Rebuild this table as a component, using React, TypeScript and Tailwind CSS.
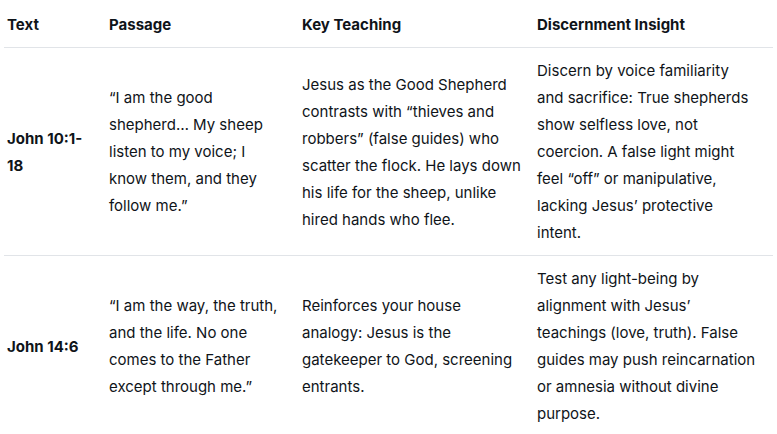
// each cell keeps the line breaks of the original rendering
const rows = [
  {
    text: ["John 10:1-", "18"],
    passage: [
      "\u201CI am the good",
      "shepherd\u2026 My sheep",
      "listen to my voice; I",
      "know them, and they",
      "follow me.\u201D",
    ],
    teaching: [
      "Jesus as the Good Shepherd",
      "contrasts with \u201Cthieves and",
      "robbers\u201D (false guides) who",
      "scatter the flock. He lays down",
      "his life for the sheep, unlike",
      "hired hands who flee.",
    ],
    insight: [
      "Discern by voice familiarity",
      "and sacrifice: True shepherds",
      "show selfless love, not",
      "coercion. A false light might",
      "feel \u201Coff\u201D or manipulative,",
      "lacking Jesus\u2019 protective",
      "intent.",
    ],
  },
  {
    text: ["John 14:6"],
    passage: [
      "\u201CI am the way, the truth,",
      "and the life. No one",
      "comes to the Father",
      "except through me.\u201D",
    ],
    teaching: [
      "Reinforces your house",
      "analogy: Jesus is the",
      "gatekeeper to God, screening",
      "entrants.",
    ],
    insight: [
      "Test any light-being by",
      "alignment with Jesus\u2019",
      "teachings (love, truth). False",
      "guides may push reincarnation",
      "or amnesia without divine",
      "purpose.",
    ],
  },
];

const Lines = ({ lines }: { lines: string[] }) => (
  <>
    {lines.map((line, i) => (
      <span key={i} className="block whitespace-nowrap">
        {line}
      </span>
    ))}
  </>
);

export default function App() {
  return (
    <div className="min-h-screen bg-white px-[4px] font-['Inter',sans-serif] text-[15px] leading-[27px] text-[#0f1419]">
      <table className="w-[769px] table-fixed border-collapse text-left">
        <colgroup>
          <col className="w-[102px]" />
          <col className="w-[193px]" />
          <col className="w-[235px]" />
          <col className="w-[239px]" />
        </colgroup>
        <thead>
          <tr className="border-b border-[#e1e4e8]">
            <th className="pt-[11px] pb-[9px] pl-[3px] pr-3 font-bold">Text</th>
            <th className="pt-[11px] pb-[9px] pl-[3px] pr-3 font-bold">Passage</th>
            <th className="pt-[11px] pb-[9px] pl-[3px] pr-3 font-bold">Key Teaching</th>
            <th className="pt-[11px] pb-[9px] pl-[3px] pr-3 font-bold">Discernment Insight</th>
          </tr>
        </thead>
        <tbody>
          {rows.map((row, index) => (
            <tr key={index} className="border-b border-[#e1e4e8] align-middle">
              <td className="py-[9px] pl-[3px] pr-3 font-bold">
                <Lines lines={row.text} />
              </td>
              <td className="py-[9px] pl-[3px] pr-3">
                <Lines lines={row.passage} />
              </td>
              <td className="py-[9px] pl-[3px] pr-3">
                <Lines lines={row.teaching} />
              </td>
              <td className="py-[9px] pl-[3px] pr-3">
                <Lines lines={row.insight} />
              </td>
            </tr>
          ))}
        </tbody>
      </table>
    </div>
  );
}
